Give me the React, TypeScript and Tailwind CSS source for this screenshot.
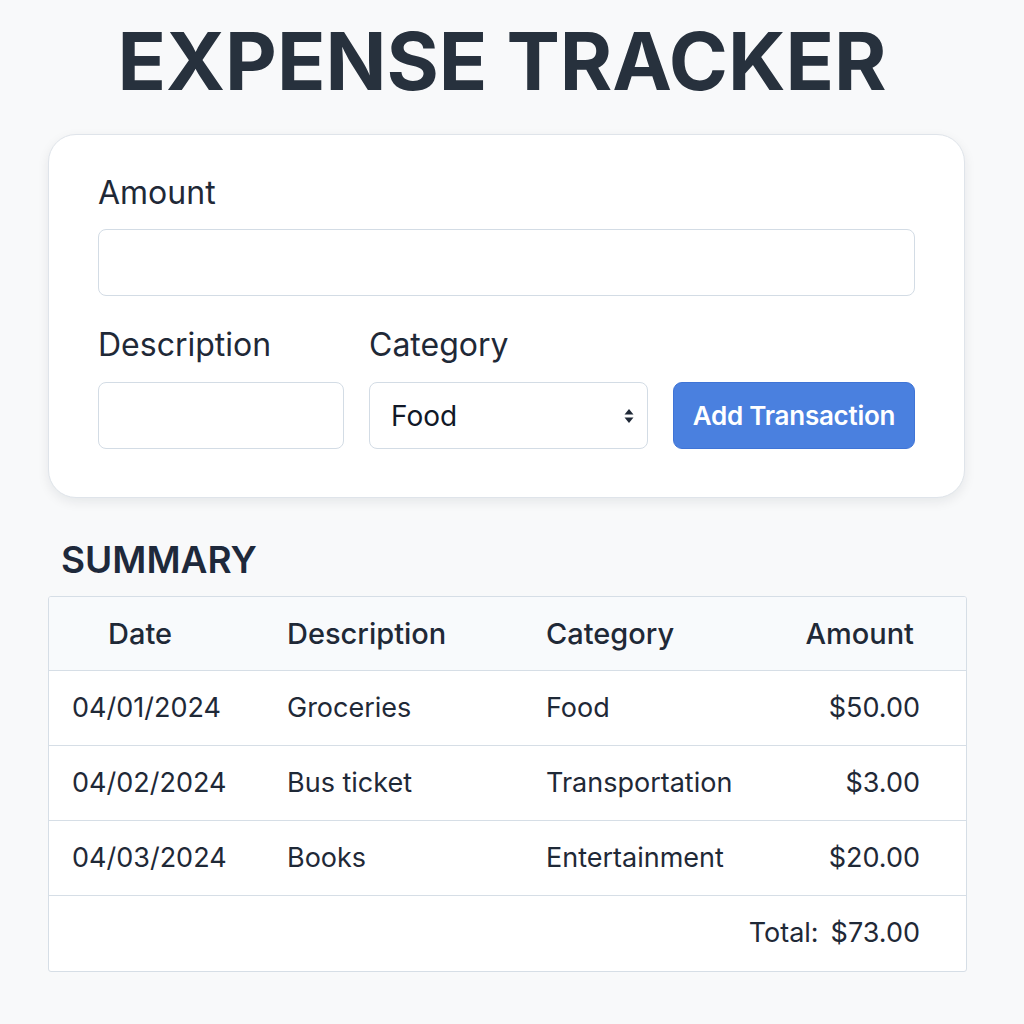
import { useState } from "react";

type Txn = {
	date: string;
	description: string;
	category: string;
	amount: number;
};

const transactions: Txn[] = [
	{ date: "04/01/2024", description: "Groceries", category: "Food", amount: 50 },
	{ date: "04/02/2024", description: "Bus ticket", category: "Transportation", amount: 3 },
	{ date: "04/03/2024", description: "Books", category: "Entertainment", amount: 20 },
];

function money(n: number) {
	return `$${n.toFixed(2)}`;
}

function SelectArrows() {
	return (
		<svg
			width="12"
			height="18"
			viewBox="0 0 12 18"
			className="pointer-events-none absolute right-[13px] top-1/2 -translate-y-1/2"
		>
			<path d="M6 2 L10.5 7.5 H1.5 Z" fill="#1f2937" />
			<path d="M6 16 L10.5 10.5 H1.5 Z" fill="#1f2937" />
		</svg>
	);
}

export default function App() {
	const [amount, setAmount] = useState("");
	const [description, setDescription] = useState("");
	const [category, setCategory] = useState("Food");

	const total = transactions.reduce((sum, t) => sum + t.amount, 0);

	return (
		<main className="min-h-[1024px] bg-[#f8f9fa] pb-12 pt-[21px] font-['Inter',sans-serif] text-[#1f2937]">
			<h1 className="m-0 pr-5 text-center text-[80px] font-bold leading-none text-[#27313d]">
				EXPENSE TRACKER
			</h1>

			<section className="ml-12 mt-[33px] w-[917px] rounded-[28px] border border-[#dfe4ea] bg-white px-[49px] pb-[48px] pt-[38px] shadow-[0_4px_12px_rgba(15,23,42,0.08)]">
				<label className="block text-[32px] leading-[40px] text-[#1f2937]">Amount</label>
				<input
					value={amount}
					onChange={(e) => setAmount(e.target.value)}
					className="mt-[16px] block h-[67px] w-full rounded-[8px] border border-[#d3dce5] bg-white px-5 text-[27px] outline-none"
				/>

				<div className="mt-[29px] flex items-end gap-[25px]">
					<div className="flex w-[246px] flex-col">
						<label className="text-[32px] leading-[40px]">Description</label>
						<input
							value={description}
							onChange={(e) => setDescription(e.target.value)}
							className="mt-[17px] h-[67px] w-full rounded-[8px] border border-[#d3dce5] bg-white px-5 text-[27px] outline-none"
						/>
					</div>
					<div className="flex w-[279px] flex-col">
						<label className="text-[32px] leading-[40px]">Category</label>
						<div className="relative mt-[17px]">
							<select
								value={category}
								onChange={(e) => setCategory(e.target.value)}
								className="h-[67px] w-full appearance-none rounded-[8px] border border-[#d3dce5] bg-white pl-[21px] pr-10 text-[28px] text-[#111827] outline-none"
							>
								<option>Food</option>
								<option>Transportation</option>
								<option>Entertainment</option>
							</select>
							<SelectArrows />
						</div>
					</div>
					<button
						type="button"
						className="h-[67px] flex-1 rounded-[9px] border border-[#3f74d6] bg-[#4a80df] text-[26px] font-semibold tracking-[-0.01em] text-white"
					>
						Add Transaction
					</button>
				</div>
			</section>

			<h2 className="m-0 ml-[61px] mt-[40px] text-[37px] font-semibold leading-[44px] text-[#1e293b]">
				SUMMARY
			</h2>

			<table className="ml-12 mt-[14px] w-[917px] table-fixed border-separate border-spacing-0 overflow-hidden rounded-[3px] border border-[#d6dee6] bg-white text-[27px]">
				<colgroup>
					<col className="w-[215px]" />
					<col className="w-[259px]" />
					<col className="w-[238px]" />
					<col className="w-[205px]" />
				</colgroup>
				<thead>
					<tr className="h-[74px] bg-[#f8fafc] text-[29px]">
						<th className="border-b border-[#d6dee6] pl-[59px] text-left font-medium">Date</th>
						<th className="border-b border-[#d6dee6] pl-[23px] text-left font-medium">Description</th>
						<th className="border-b border-[#d6dee6] pl-[23px] text-left font-medium">Category</th>
						<th className="border-b border-[#d6dee6] pr-[52px] text-right font-medium">Amount</th>
					</tr>
				</thead>
				<tbody>
					{transactions.map((t) => (
						<tr key={t.date} className="h-[75px]">
							<td className="border-b border-[#d6dee6] pl-[23px]">{t.date}</td>
							<td className="border-b border-[#d6dee6] pl-[23px]">{t.description}</td>
							<td className="border-b border-[#d6dee6] pl-[23px]">{t.category}</td>
							<td className="border-b border-[#d6dee6] pr-[46px] text-right">{money(t.amount)}</td>
						</tr>
					))}
					<tr className="h-[75px]">
						<td colSpan={4} className="pr-[46px] text-right">
							Total:<span className="ml-3">{money(total)}</span>
						</td>
					</tr>
				</tbody>
			</table>
		</main>
	);
}
